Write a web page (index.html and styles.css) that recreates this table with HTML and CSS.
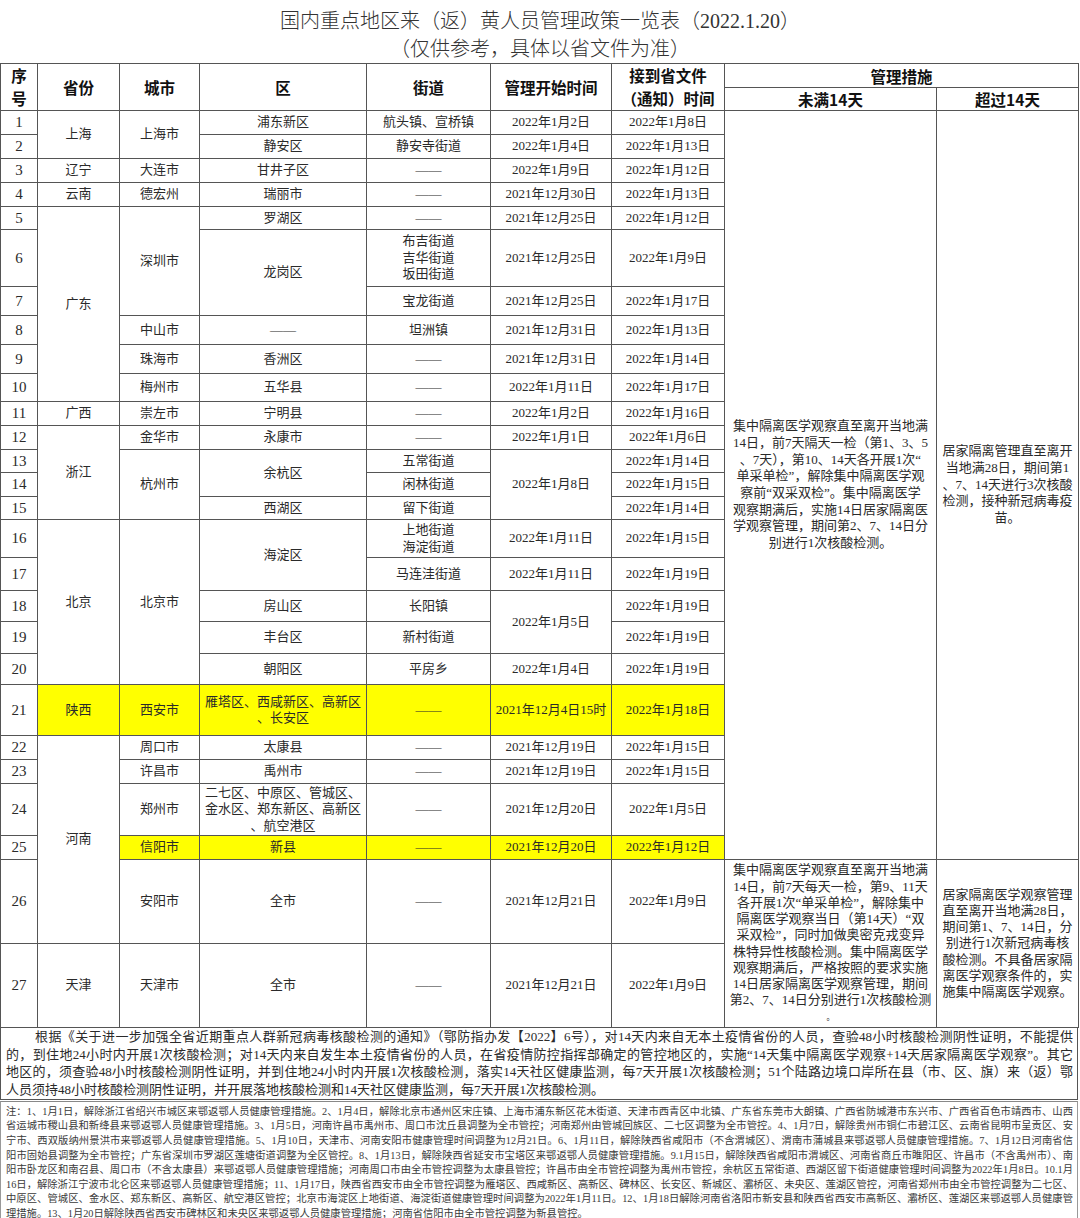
FILE: index.html
```html
<!DOCTYPE html>
<html lang="zh-CN">
<head>
<meta charset="utf-8">
<title>国内重点地区来（返）黄人员管理政策一览表</title>
<link rel="stylesheet" href="styles.css">
</head>
<body>
<div class="page">
  <div class="title">
    <div>国内重点地区来（返）黄人员管理政策一览表（2022.1.20）</div>
    <div>（仅供参考，具体以省文件为准）</div>
  </div>
  <table class="policy">
    <colgroup>
      <col class="c-no"><col class="c-prov"><col class="c-city"><col class="c-dist"><col class="c-street"><col class="c-start"><col class="c-recv"><col class="c-m1"><col class="c-m2">
    </colgroup>
    <thead>
      <tr class="hh1">
        <th rowspan="2" class="two">序<br>号</th>
        <th rowspan="2">省份</th>
        <th rowspan="2">城市</th>
        <th rowspan="2">区</th>
        <th rowspan="2">街道</th>
        <th rowspan="2">管理开始时间</th>
        <th rowspan="2" class="two">接到省文件<br>（通知）时间</th>
        <th colspan="2">管理措施</th>
      </tr>
      <tr class="hh2">
        <th>未满14天</th>
        <th>超过14天</th>
      </tr>
    </thead>
    <tbody>
      <tr class="h24">
        <td class="no">1</td><td rowspan="2">上海</td><td rowspan="2">上海市</td><td>浦东新区</td><td>航头镇、宣桥镇</td><td>2022年1月2日</td><td>2022年1月8日</td>
        <td rowspan="25" class="measure">集中隔离医学观察直至离开当地满<br>14日，前7天隔天一检（第1、3、5<br>、7天），第10、14天各开展1次“<br>单采单检”，解除集中隔离医学观<br>察前“双采双检”。集中隔离医学<br>观察期满后，实施14日居家隔离医<br>学观察管理，期间第2、7、14日分<br>别进行1次核酸检测。</td>
        <td rowspan="25" class="measure">居家隔离管理直至离开<br>当地满28日，期间第1<br>、7、14天进行3次核酸<br>检测，接种新冠病毒疫<br>苗。</td>
      </tr>
      <tr class="h24"><td class="no">2</td><td>静安区</td><td>静安寺街道</td><td>2022年1月4日</td><td>2022年1月13日</td></tr>
      <tr class="h24"><td class="no">3</td><td>辽宁</td><td>大连市</td><td>甘井子区</td><td>——</td><td>2022年1月9日</td><td>2022年1月12日</td></tr>
      <tr class="h24"><td class="no">4</td><td>云南</td><td>德宏州</td><td>瑞丽市</td><td>——</td><td>2021年12月30日</td><td>2022年1月13日</td></tr>
      <tr class="h23"><td class="no">5</td><td rowspan="6">广东</td><td rowspan="3">深圳市</td><td>罗湖区</td><td>——</td><td>2021年12月25日</td><td>2022年1月12日</td></tr>
      <tr class="h57"><td class="no">6</td><td rowspan="2">龙岗区</td><td class="multi">布吉街道<br>吉华街道<br>坂田街道</td><td>2021年12月25日</td><td>2022年1月9日</td></tr>
      <tr class="h29"><td class="no">7</td><td>宝龙街道</td><td>2021年12月25日</td><td>2022年1月17日</td></tr>
      <tr class="h29"><td class="no">8</td><td>中山市</td><td>——</td><td>坦洲镇</td><td>2021年12月31日</td><td>2022年1月13日</td></tr>
      <tr class="h29"><td class="no">9</td><td>珠海市</td><td>香洲区</td><td>——</td><td>2021年12月31日</td><td>2022年1月14日</td></tr>
      <tr class="h28"><td class="no">10</td><td>梅州市</td><td>五华县</td><td>——</td><td>2022年1月11日</td><td>2022年1月17日</td></tr>
      <tr class="h24"><td class="no">11</td><td>广西</td><td>崇左市</td><td>宁明县</td><td>——</td><td>2022年1月2日</td><td>2022年1月16日</td></tr>
      <tr class="h24"><td class="no">12</td><td rowspan="4">浙江</td><td>金华市</td><td>永康市</td><td>——</td><td>2022年1月1日</td><td>2022年1月6日</td></tr>
      <tr class="h23"><td class="no">13</td><td rowspan="3">杭州市</td><td rowspan="2">余杭区</td><td>五常街道</td><td rowspan="3">2022年1月8日</td><td>2022年1月14日</td></tr>
      <tr class="h24"><td class="no">14</td><td>闲林街道</td><td>2022年1月15日</td></tr>
      <tr class="h23"><td class="no">15</td><td>西湖区</td><td>留下街道</td><td>2022年1月14日</td></tr>
      <tr class="h38"><td class="no">16</td><td rowspan="5">北京</td><td rowspan="5">北京市</td><td rowspan="2">海淀区</td><td class="multi">上地街道<br>海淀街道</td><td>2022年1月11日</td><td>2022年1月15日</td></tr>
      <tr class="h33"><td class="no">17</td><td>马连洼街道</td><td>2022年1月11日</td><td>2022年1月19日</td></tr>
      <tr class="h31"><td class="no">18</td><td>房山区</td><td>长阳镇</td><td rowspan="2">2022年1月5日</td><td>2022年1月19日</td></tr>
      <tr class="h32"><td class="no">19</td><td>丰台区</td><td>新村街道</td><td>2022年1月19日</td></tr>
      <tr class="h31"><td class="no">20</td><td>朝阳区</td><td>平房乡</td><td>2022年1月4日</td><td>2022年1月19日</td></tr>
      <tr class="h51"><td class="no">21</td><td class="hl">陕西</td><td class="hl">西安市</td><td class="hl multi">雁塔区、西咸新区、高新区<br>、长安区</td><td class="hl">——</td><td class="hl">2021年12月4日15时</td><td class="hl">2022年1月18日</td></tr>
      <tr class="h24"><td class="no">22</td><td rowspan="5">河南</td><td>周口市</td><td>太康县</td><td>——</td><td>2021年12月19日</td><td>2022年1月15日</td></tr>
      <tr class="h24"><td class="no">23</td><td>许昌市</td><td>禹州市</td><td>——</td><td>2021年12月19日</td><td>2022年1月15日</td></tr>
      <tr class="h52"><td class="no">24</td><td>郑州市</td><td class="multi">二七区、中原区、管城区、<br>金水区、郑东新区、高新区<br>、航空港区</td><td>——</td><td>2021年12月20日</td><td>2022年1月5日</td></tr>
      <tr class="h24"><td class="no">25</td><td class="hl">信阳市</td><td class="hl">新县</td><td class="hl">——</td><td class="hl">2021年12月20日</td><td class="hl">2022年1月12日</td></tr>
      <tr class="h84">
        <td class="no">26</td><td>安阳市</td><td>全市</td><td>——</td><td>2021年12月21日</td><td>2022年1月9日</td>
        <td rowspan="2" class="measure tight">集中隔离医学观察直至离开当地满<br>14日，前7天每天一检，第9、11天<br>各开展1次“单采单检”，解除集中<br>隔离医学观察当日（第14天）“双<br>采双检”，同时加做奥密克戎变异<br>株特异性核酸检测。集中隔离医学<br>观察期满后，严格按照的要求实施<br>14日居家隔离医学观察管理，期间<br>第2、7、14日分别进行1次核酸检测<br><span class="dot">。</span></td>
        <td rowspan="2" class="measure tight">居家隔离医学观察管理<br>直至离开当地满28日，<br>期间第1、7、14日，分<br>别进行1次新冠病毒核<br>酸检测。不具备居家隔<br>离医学观察条件的，实<br>施集中隔离医学观察。</td>
      </tr>
      <tr class="h84"><td class="no">27</td><td>天津</td><td>天津市</td><td>全市</td><td>——</td><td>2021年12月21日</td><td>2022年1月9日</td></tr>
    </tbody>
  </table>
  <div class="basis">
    <div class="jl indent">根据《关于进一步加强全省近期重点人群新冠病毒核酸检测的通知》（鄂防指办发【2022】6号），对14天内来自无本土疫情省份的人员，查验48小时核酸检测阴性证明，不能提供</div>
    <div class="jl">的，到住地24小时内开展1次核酸检测；对14天内来自发生本土疫情省份的人员，在省疫情防控指挥部确定的管控地区的，实施“14天集中隔离医学观察+14天居家隔离医学观察”。其它</div>
    <div class="jl">地区的，须查验48小时核酸检测阴性证明，并到住地24小时内开展1次核酸检测，落实14天社区健康监测，每7天开展1次核酸检测；51个陆路边境口岸所在县（市、区、旗）来（返）鄂</div>
    <div>人员须持48小时核酸检测阴性证明，并开展落地核酸检测和14天社区健康监测，每7天开展1次核酸检测。</div>
  </div>
  <div class="notes">
    <div class="jl">注：1、1月1日，解除浙江省绍兴市城区来鄂返鄂人员健康管理措施。2、1月4日，解除北京市通州区宋庄镇、上海市浦东新区花木街道、天津市西青区中北镇、广东省东莞市大朗镇、广西省防城港市东兴市、广西省百色市靖西市、山西</div>
    <div class="jl">省运城市稷山县和新绛县来鄂返鄂人员健康管理措施。3、1月5日，河南许昌市禹州市、周口市沈丘县调整为全市管控；河南郑州由管城回族区、二七区调整为全市管控。4、1月7日，解除贵州市铜仁市碧江区、云南省昆明市呈贡区、安</div>
    <div class="jl">宁市、西双版纳州景洪市来鄂返鄂人员健康管理措施。5、1月10日，天津市、河南安阳市健康管理时间调整为12月21日。6、1月11日，解除陕西省咸阳市（不含渭城区）、渭南市蒲城县来鄂返鄂人员健康管理措施。7、1月12日河南省信</div>
    <div class="jl">阳市固始县调整为全市管控；广东省深圳市罗湖区莲塘街道调整为全区管控。8、1月13日，解除陕西省延安市宝塔区来鄂返鄂人员健康管理措施。9.1月15日，解除陕西省咸阳市渭城区、河南省商丘市睢阳区、许昌市（不含禹州市）、南</div>
    <div class="jl">阳市卧龙区和南召县、周口市（不含太康县）来鄂返鄂人员健康管理措施；河南周口市由全市管控调整为太康县管控；许昌市由全市管控调整为禹州市管控，余杭区五常街道、西湖区留下街道健康管理时间调整为2022年1月8日。10.1月</div>
    <div class="jl">16日，解除浙江宁波市北仑区来鄂返鄂人员健康管理措施；11、1月17日，陕西省西安市由全市管控调整为雁塔区、西咸新区、高新区、碑林区、长安区、新城区、灞桥区、未央区、莲湖区管控，河南省郑州市由全市管控调整为二七区、</div>
    <div class="jl">中原区、管城区、金水区、郑东新区、高新区、航空港区管控；北京市海淀区上地街道、海淀街道健康管理时间调整为2022年1月11日。12、1月18日解除河南省洛阳市新安县和陕西省西安市高新区、灞桥区、莲湖区来鄂返鄂人员健康管</div>
    <div>理措施。13、1月20日解除陕西省西安市碑林区和未央区来鄂返鄂人员健康管理措施；河南省信阳市由全市管控调整为新县管控。</div>
  </div>
</div>
</body>
</html>
```
FILE: styles.css
```css
html, body {
  margin: 0;
  padding: 0;
  background: #ffffff;
}
body {
  font-family: "Liberation Serif", "Noto Sans CJK SC", serif;
  color: #222;
}
.page {
  width: 1080px;
  height: 1218px;
  overflow: hidden;
}
.title {
  height: 63px;
  box-sizing: border-box;
  padding-top: 7px;
  text-align: center;
  font-family: "Liberation Serif", "Noto Sans CJK SC", sans-serif;
  font-weight: 300;
  font-size: 20px;
  line-height: 28px;
  color: #333;
}
.policy {
  border-collapse: collapse;
  table-layout: fixed;
  width: 1078px;
  border: 1px solid #444;
}
.c-no { width: 37px; }
.c-prov { width: 82px; }
.c-city { width: 80px; }
.c-dist { width: 167px; }
.c-street { width: 124px; }
.c-start { width: 121px; }
.c-recv { width: 113px; }
.c-m1 { width: 212px; }
.c-m2 { width: 142px; }

.policy th,
.policy td {
  border: 1px solid #555;
  padding: 0;
  text-align: center;
  vertical-align: middle;
}
.policy th {
  font-family: "Noto Sans CJK SC", sans-serif;
  font-weight: 700;
  font-size: 15.5px;
  line-height: 22px;
  color: #111;
}
.policy th.two {
  line-height: 23px;
}
.policy td {
  font-size: 13px;
  line-height: 16.5px;
  color: #2a2a2a;
}
.policy td.no {
  font-size: 15px;
}
.policy td.multi {
  line-height: 16.5px;
}
.policy td.hl {
  background: #ffff00;
}
.policy td.measure {
  padding: 0 2px;
  line-height: 16.7px;
  color: #2a2a2a;
}
.policy td.measure.tight {
  line-height: 16.2px;
}
.dot {
  font-size: 8px;
  line-height: 9px;
}

.hh1 { height: 24px; }
.hh2 { height: 23px; }
.h23 { height: 23px; }
.h24 { height: 24px; }
.h28 { height: 28px; }
.h29 { height: 29px; }
.h31 { height: 31px; }
.h32 { height: 32px; }
.h33 { height: 33px; }
.h38 { height: 38px; }
.h51 { height: 51px; }
.h52 { height: 52px; }
.h57 { height: 57px; }
.h84 { height: 84px; }

.basis {
  width: 1078px;
  box-sizing: border-box;
  border: 1px solid #555;
  border-top: none;
  padding: 0 4px 0 5px;
  font-size: 13px;
  line-height: 17.7px;
  color: #2a2a2a;
}
.jl {
  text-align: justify;
  text-align-last: justify;
}
.indent {
  padding-left: 29px;
}
.notes {
  width: 1078px;
  box-sizing: border-box;
  border: 1px solid #999;
  border-top: 1px solid #888;
  margin-top: 1px;
  padding: 3px 4px 0 5px;
  font-size: 10.3px;
  line-height: 14.6px;
  color: #3a3a3a;
}
```
